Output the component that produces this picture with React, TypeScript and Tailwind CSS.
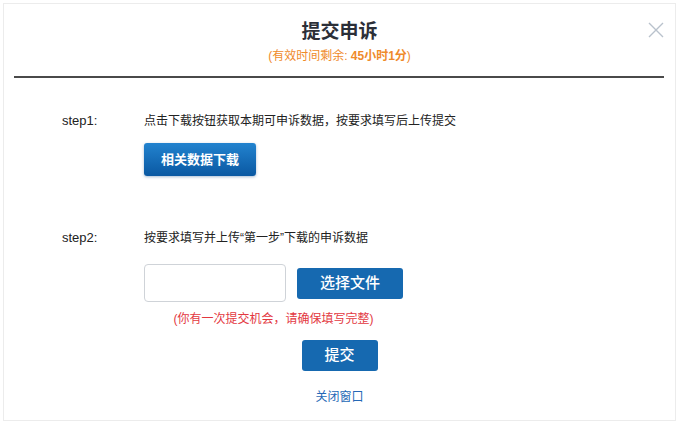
import React from "react";

export default function App() {
  return (
    <div className="w-[677px] h-[423px] bg-white p-[3px] pb-[2px] pr-[1px]" style={{ fontFamily: '"Liberation Sans", "Noto Sans CJK SC", sans-serif' }}>
      <div className="relative h-full border border-[#ececec] bg-white pt-[16px]">
        <button className="absolute right-[11px] top-[18px] text-[#b9c2cc]">
          <svg width="16" height="16" viewBox="0 0 16 16" fill="none" stroke="currentColor" strokeWidth="1.4">
            <path d="M1 1 L15 15 M15 1 L1 15" />
          </svg>
        </button>
        <div className="text-center text-[19px] leading-[24px] font-bold text-[#2b2f38]">提交申诉</div>
        <div className="mt-[4px] text-center text-[12px] leading-[16px] text-[#ef8a2a]">
          (有效时间剩余: <span className="font-bold">45小时1分</span>)
        </div>
        <div className="mt-[12px] ml-[10px] mr-[11px] h-[2px] bg-[#4a4a4a]" />

        <div className="mt-[34px] flex">
          <div className="w-[82px] pl-[58px] box-content text-[13px] leading-[18px] text-[#222]">step1:</div>
          <div className="flex flex-col items-start">
            <div className="text-[12px] leading-[18px] text-[#222]">点击下载按钮获取本期可申诉数据，按要求填写后上传提交</div>
            <button className="mt-[13px] h-[33px] w-[112px] rounded-[3px] bg-gradient-to-b from-[#2283cf] to-[#0a58a2] text-[13px] font-bold text-white shadow-[0_1px_3px_rgba(0,60,130,0.35)]">
              相关数据下载
            </button>
          </div>
        </div>

        <div className="mt-[53px] flex">
          <div className="w-[82px] pl-[58px] box-content text-[13px] leading-[18px] text-[#222]">step2:</div>
          <div className="flex flex-col items-start">
            <div className="text-[12px] leading-[18px] text-[#222]">按要求填写并上传“第一步”下载的申诉数据</div>
            <div className="mt-[17px] flex flex-col items-center">
              <div className="flex items-center gap-[11px]">
                <div className="h-[38px] w-[142px] rounded-[4px] border border-[#cfd3d8] bg-white" />
                <button className="h-[31px] w-[106px] rounded-[3px] bg-[#1669b0] text-[15px] font-medium text-white">选择文件</button>
              </div>
              <div className="mt-[9px] text-[12px] leading-[16px] text-[#e3383f]">(你有一次提交机会，请确保填写完整)</div>
            </div>
          </div>
        </div>

        <div className="mt-[13px] flex justify-center">
          <button className="h-[31px] w-[76px] rounded-[3px] bg-[#1669b0] text-[15px] font-medium text-white">提交</button>
        </div>
        <div className="mt-[18px] text-center text-[12px] leading-[16px] text-[#2468b6]">关闭窗口</div>
      </div>
    </div>
  );
}
